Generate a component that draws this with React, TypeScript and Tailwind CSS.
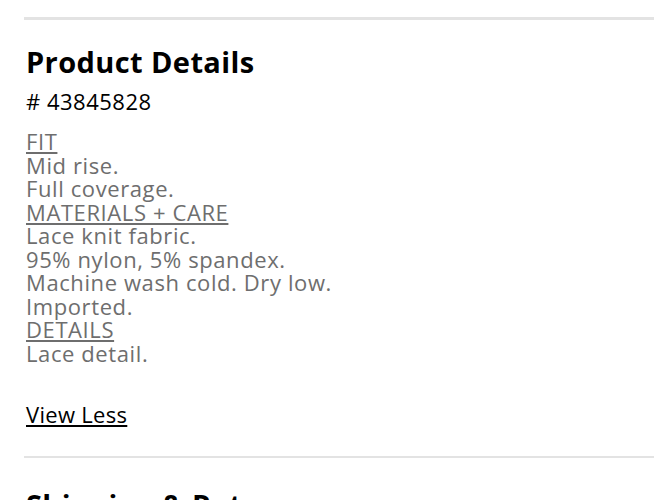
import React from "react";

export default function App() {
  const font = { fontFamily: "'Open Sans', 'Liberation Sans', sans-serif" };
  return (
    <div className="w-[654px] h-[500px] overflow-hidden bg-white" style={font}>
      <div className="pl-[24px] pt-[17px]">
        <div className="h-[3px] bg-[#e3e3e3]" />
        <div className="pl-[2px] pt-[24.5px]">
          <h2 className="text-[29px] leading-[34px] font-bold text-black tracking-[0.4px]">Product Details</h2>
          <div className="text-[22px] leading-[24px] text-black mt-[10.75px] tracking-[0.5px]"># 43845828</div>
          <div className="mt-[17.2px] text-[22px] leading-[23.5px] text-[#6e6e6e] tracking-[0.6px]">
            <div className="underline underline-offset-[2px]">FIT</div>
            <div>Mid rise.</div>
            <div>Full coverage.</div>
            <div className="underline underline-offset-[2px]">MATERIALS + CARE</div>
            <div>Lace knit fabric.</div>
            <div>95% nylon, 5% spandex.</div>
            <div>Machine wash cold. Dry low.</div>
            <div>Imported.</div>
            <div className="underline underline-offset-[2px]">DETAILS</div>
            <div>Lace detail.</div>
          </div>
          <div className="mt-[36.8px] text-[22px] leading-[24px] text-black underline underline-offset-[2px] tracking-[0.3px]">View Less</div>
        </div>
        <div className="mt-[29.8px] h-[2px] bg-[#e3e3e3]" />
        <div className="pl-[2px] pt-[29.5px]">
          <h2 className="text-[29px] leading-[34px] font-bold text-black tracking-[0.4px]">Shipping &amp; Returns</h2>
        </div>
      </div>
    </div>
  );
}
